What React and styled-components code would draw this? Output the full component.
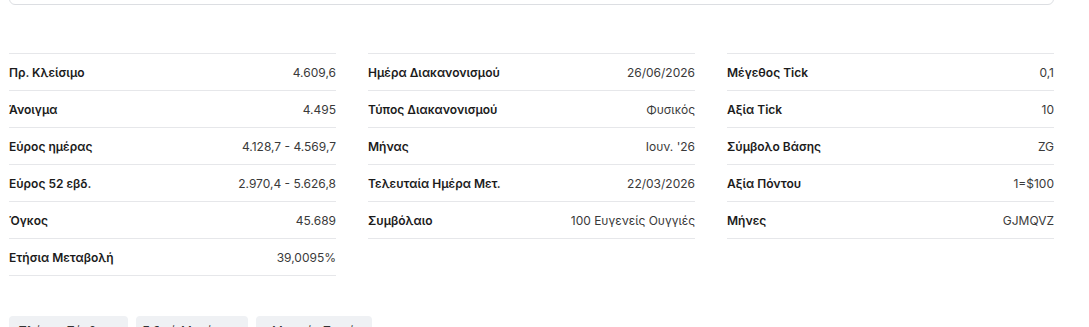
import React from "react";
import styled, { createGlobalStyle } from "styled-components";

const Global = createGlobalStyle`
  html, body {
    margin: 0;
    padding: 0;
    background: #fff;
    font-family: Inter, "Noto Sans", sans-serif;
    color: #1a1a1a;
  }
`;

const Page = styled.div`
  padding: 0 35px 0 9px;
  overflow: hidden;
  height: 327px;
`;

const SearchBox = styled.div`
  height: 40px;
  margin-top: -37px;
  border: 1px solid #dcdee2;
  border-radius: 6px;
  background: #fff;
`;

const Columns = styled.div`
  display: grid;
  grid-template-columns: repeat(3, 1fr);
  column-gap: 32px;
  margin-top: 48px;
  align-items: start;
`;

const Column = styled.div`
  border-top: 1px solid #e6e7ea;
`;

const Row = styled.div`
  display: flex;
  justify-content: space-between;
  align-items: center;
  height: 36px;
  border-bottom: 1px solid #e6e7ea;
  font-size: 12px;
`;

const Label = styled.span`
  font-weight: 600;
  color: #1b1b1b;
`;

const Value = styled.span`
  color: #3a3a3a;
`;

const Chips = styled.div`
  display: flex;
  gap: 8px;
  margin-top: 40px;
`;

const Chip = styled.button`
  font-family: inherit;
  font-size: 12px;
  color: #333;
  background: #eff1f4;
  border: none;
  border-radius: 4px;
  height: 29px;
  width: ${(p) => p.w}px;
  padding: 0;
`;

const cols = [
  [
    ["Πρ. Κλείσιμο", "4.609,6"],
    ["Άνοιγμα", "4.495"],
    ["Εύρος ημέρας", "4.128,7 - 4.569,7"],
    ["Εύρος 52 εβδ.", "2.970,4 - 5.626,8"],
    ["Όγκος", "45.689"],
    ["Ετήσια Μεταβολή", "39,0095%"],
  ],
  [
    ["Ημέρα Διακανονισμού", "26/06/2026"],
    ["Τύπος Διακανονισμού", "Φυσικός"],
    ["Μήνας", "Ιουν. '26"],
    ["Τελευταία Ημέρα Μετ.", "22/03/2026"],
    ["Συμβόλαιο", "100 Ευγενείς Ουγγιές"],
  ],
  [
    ["Μέγεθος Tick", "0,1"],
    ["Αξία Tick", "10"],
    ["Σύμβολο Βάσης", "ZG"],
    ["Αξία Πόντου", "1=$100"],
    ["Μήνες", "GJMQVZ"],
  ],
];

export default function App() {
  return (
    <Page>
      <Global />
      <SearchBox />
      <Columns>
        {cols.map((rows, i) => (
          <Column key={i}>
            {rows.map(([l, v]) => (
              <Row key={l}>
                <Label>{l}</Label>
                <Value>{v}</Value>
              </Row>
            ))}
          </Column>
        ))}
      </Columns>
      <Chips>
        <Chip w={119}>Πλήρης Σύμβαση</Chip>
        <Chip w={112}>Ειδικά Μηνύματα</Chip>
        <Chip w={116}>Μηνιαία Σειρά</Chip>
      </Chips>
    </Page>
  );
}
